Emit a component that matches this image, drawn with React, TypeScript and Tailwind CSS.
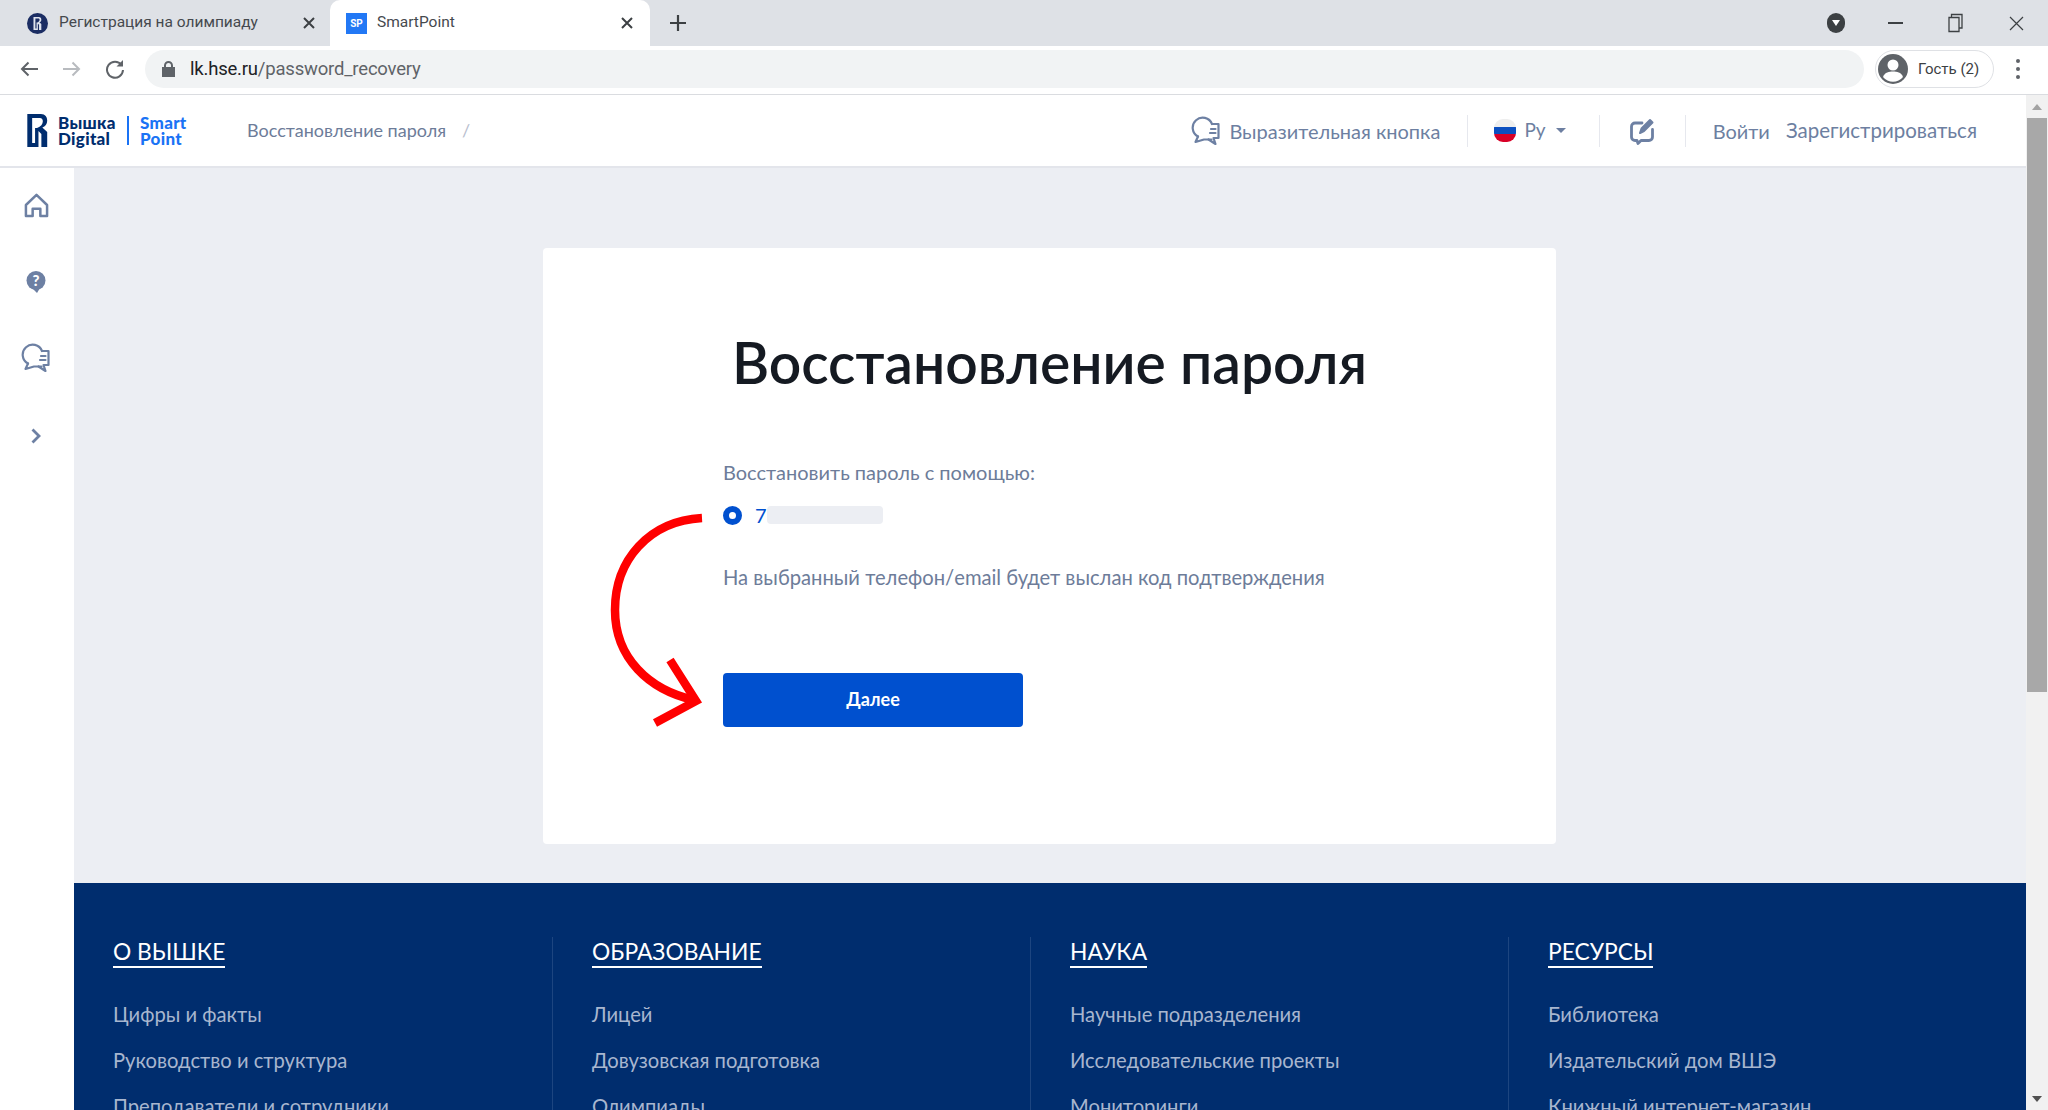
import React from "react";

const Chat = ({ className }: { className: string }) => (
  <svg viewBox="0 0 30 30" className={className} fill="none" stroke="#6d80a3" strokeWidth="2.200" strokeLinejoin="round" strokeLinecap="round">
    <path d="M7 20.500A10 10 0 1 1 21 8" />
    <path d="M7 20.500L4.500 26 13 23.500H20.500" />
    <path d="M21 8H27.500V22H22.500L24.500 28 17.500 23.500" />
    <path d="M20 13H24.500M19 17H24.500" />
  </svg>
);

const columns = [
  { title: "О ВЫШКЕ", items: ["Цифры и факты", "Руководство и структура", "Преподаватели и сотрудники"] },
  { title: "ОБРАЗОВАНИЕ", items: ["Лицей", "Довузовская подготовка", "Олимпиады"] },
  { title: "НАУКА", items: ["Научные подразделения", "Исследовательские проекты", "Мониторинги"] },
  { title: "РЕСУРСЫ", items: ["Библиотека", "Издательский дом ВШЭ", "Книжный интернет-магазин"] },
];

const HseMark = ({ className, color = "#002d6e" }: { className: string; color?: string }) => (
  <svg viewBox="0 0 21 34" className={className} fill={color} fillRule="evenodd">
    <path d="M0 0H14C18.500 0 20.500 3 20.500 7C20.500 10.500 18.500 12.800 15.500 14L20.500 18.500V34H14.500V20.500L11.500 17.500V34H0ZM5 4V30H8V14.500H10C14 13 16 10.500 16 7.500C16 5.500 15 4 13 4Z" />
  </svg>
);

const TabClose = ({ className }: { className: string }) => (
  <svg viewBox="0 0 14 14" className={className} stroke="#3c4043" strokeWidth="2" fill="none">
    <path d="M2 2l10 10M12 2L2 12" />
  </svg>
);

export default function App() {
  return (
    <div className="h-[1110px] w-[2048px] overflow-hidden flex flex-col bg-white font-['Lato','Noto_Sans',sans-serif]">
      {/* Browser tab strip */}
      <div className="h-[46px] shrink-0 bg-[#dee1e6] flex items-center font-['Roboto',sans-serif]">
        <div className="w-[330px] h-full flex items-center pl-[27px] pr-[14px]">
          <div className="w-[21px] h-[21px] rounded-full bg-[#1b2d63] flex items-center justify-center">
            <HseMark className="w-[9px] h-[13px]" color="#dfe3ee" />
          </div>
          <span className="ml-[11px] text-[15.5px] text-[#45494e] whitespace-nowrap">Регистрация на олимпиаду</span>
          <TabClose className="w-[14px] h-[14px] ml-auto" />
        </div>
        <div className="w-[320px] h-full bg-white rounded-t-[10px] flex items-center pl-[16px] pr-[16px]">
          <div className="w-[21px] h-[21px] bg-[#2278f5] flex items-center justify-center text-white text-[10px] font-bold">SP</div>
          <span className="ml-[10px] text-[15.5px] text-[#45494e]">SmartPoint</span>
          <TabClose className="w-[14px] h-[14px] ml-auto" />
        </div>
        <svg viewBox="0 0 16 16" className="w-[16px] h-[16px] ml-[20px]" stroke="#3c4043" strokeWidth="2.200" fill="none">
          <path d="M8 0v16M0 8h16" />
        </svg>
        <div className="ml-auto flex items-center">
          <div className="w-[18px] h-[20px] rounded-full bg-[#3c4043] flex items-center justify-center">
            <div className="w-0 h-0 border-l-[4px] border-r-[4px] border-t-[6px] border-l-transparent border-r-transparent border-t-white" />
          </div>
          <div className="w-[15px] h-[2px] bg-[#3c4043] ml-[43px]" />
          <svg viewBox="0 0 15 20" className="w-[15px] h-[20px] ml-[45px]" stroke="#3c4043" strokeWidth="1.300" fill="none">
            <path d="M1 4.500h10v14H1zM3.500 4.500V1.500H14v13.500h-3" />
          </svg>
          <svg viewBox="0 0 15 15" className="w-[15px] h-[15px] ml-[46px] mr-[24px]" stroke="#3c4043" strokeWidth="1.200" fill="none">
            <path d="M1 1l13 13M14 1L1 14" />
          </svg>
        </div>
      </div>

      {/* Browser toolbar */}
      <div className="h-[49px] shrink-0 bg-white border-b border-[#dadce0] flex items-center pb-[2px]">
        <svg viewBox="0 0 18 16" className="w-[18px] h-[16px] ml-[20px]" stroke="#5f6368" strokeWidth="2" fill="none">
          <path d="M18 8H2M8.500 1.500L2 8l6.500 6.500" />
        </svg>
        <svg viewBox="0 0 18 16" className="w-[18px] h-[16px] ml-[25px]" stroke="#b8bbbf" strokeWidth="2" fill="none">
          <path d="M0 8h16M9.500 1.500L16 8l-6.500 6.500" />
        </svg>
        <svg viewBox="0 0 20 20" className="w-[20px] h-[20px] ml-[24px]" stroke="#5f6368" strokeWidth="2" fill="none">
          <path d="M16.500 6A8 8 0 1 0 18 11" />
          <path d="M18 1v6.500h-6.500" fill="#5f6368" stroke="none" />
        </svg>
        <div className="w-[1719px] h-[38px] ml-[20px] rounded-full bg-[#f1f3f4] flex items-center pl-[17px]">
          <svg viewBox="0 0 13 16" className="w-[13px] h-[16px]" fill="#5f6368">
            <path d="M2 6V4.500a4.500 4.500 0 0 1 9 0V6h2v10H0V6zm2 0h5V4.500a2.500 2.500 0 0 0-5 0z" />
          </svg>
          <span className="ml-[15px] pt-[2px] text-[18.5px] tracking-[-0.2px] font-['Roboto',sans-serif]">
            <span className="text-[#202124]">lk.hse.ru</span>
            <span className="text-[#5f6368]">/password_recovery</span>
          </span>
        </div>
        <div className="ml-[11px] w-[119px] h-[38px] rounded-full border border-[#dfe1e5] flex items-center pl-[2px]">
          <svg viewBox="0 0 30 30" className="w-[30px] h-[30px]">
            <circle cx="15" cy="15" r="15" fill="#5f6368" />
            <circle cx="15" cy="11" r="5.500" fill="#fff" />
            <path d="M5 23c2-5 6-5.500 10-5.500s8 .5 10 5.500a13 13 0 0 1-20 0z" fill="#fff" />
          </svg>
          <span className="ml-[10px] text-[15px] text-[#3c4043] font-['Roboto',sans-serif] whitespace-nowrap">Гость (2)</span>
        </div>
        <div className="ml-[22px] flex flex-col gap-[4px]">
          <div className="w-[4px] h-[4px] rounded-full bg-[#5f6368]" />
          <div className="w-[4px] h-[4px] rounded-full bg-[#5f6368]" />
          <div className="w-[4px] h-[4px] rounded-full bg-[#5f6368]" />
        </div>
      </div>

      {/* Page viewport with scrollbar */}
      <div className="flex-1 min-h-0 flex">
        <div className="w-[2026px] flex flex-col">
          {/* App header */}
          <div className="h-[73px] shrink-0 bg-white border-b-2 border-[#e3e5eb] flex items-center">
            <HseMark className="w-[21px] h-[33px] ml-[27px]" />
            <div className="ml-[10px] flex flex-col text-[17px] leading-[16px] tracking-[0.3px] font-black text-[#002d6e] w-[69px]">
              <span>Вышка</span>
              <span>Digital</span>
            </div>
            <div className="w-[2px] h-[29px] bg-[#1a73f5]" />
            <div className="ml-[11px] flex flex-col text-[17px] leading-[16px] tracking-[0.3px] font-black text-[#1a73f5] w-[60px]">
              <span>Smart</span>
              <span>Point</span>
            </div>
            <span className="ml-[47px] text-[18px] text-[#6d7c99] whitespace-nowrap">Восстановление пароля</span>
            <span className="ml-[16px] text-[18px] text-[#b9c0cf]">/</span>
            <div className="ml-auto flex items-center h-[32px]">
              <Chat className="w-[30px] h-[30px]" />
              <span className="ml-[8px] text-[20px] text-[#6d7fa1] whitespace-nowrap">Выразительная кнопка</span>
              <div className="w-px h-[32px] bg-[#e6e8ee] ml-[27px]" />
              <div className="ml-[26px] w-[22px] h-[23px] rounded-[9px] overflow-hidden flex flex-col">
                <div className="flex-1 bg-[#eeeeee]" />
                <div className="flex-1 bg-[#0b4fc0]" />
                <div className="flex-1 bg-[#d80027]" />
              </div>
              <span className="ml-[8px] text-[19px] text-[#6d7fa1]">Ру</span>
              <div className="ml-[10px] w-0 h-0 border-l-[5px] border-r-[5px] border-t-[5px] border-l-transparent border-r-transparent border-t-[#6d7fa1]" />
              <div className="w-px h-[32px] bg-[#e6e8ee] ml-[33px]" />
              <svg viewBox="0 0 26 28" className="ml-[29px] w-[26px] h-[28px]" fill="none" stroke="#6d80a3" strokeWidth="2.800" strokeLinejoin="round" strokeLinecap="round">
                <path d="M13 6H6a3.500 3.500 0 0 0-3.500 3.500v10.500a3.500 3.500 0 0 0 3.500 3.500h2l1 3 3-3h8a3.500 3.500 0 0 0 3.500-3.500v-7.500" />
                <path d="M11 16l1.500-4.500L21 3l2.500 2.500-8.500 8.500z" fill="#6d80a3" strokeWidth="2" />
              </svg>
              <div className="w-px h-[32px] bg-[#e6e8ee] ml-[30px]" />
              <span className="ml-[27px] text-[20px] text-[#6d7fa1]">Войти</span>
              <span className="ml-[16px] mr-[49px] text-[20.5px] text-[#6d7fa1] whitespace-nowrap">Зарегистрироваться</span>
            </div>
          </div>

          <div className="flex-1 min-h-0 flex">
            {/* Sidebar */}
            <div className="w-[74px] shrink-0 bg-white flex flex-col items-center pt-[25px] pr-[2px]">
              <svg viewBox="0 0 26 26" className="w-[25px] h-[25px]" fill="none" stroke="#6d80a3" strokeWidth="2.600" strokeLinejoin="round">
                <path d="M13 2L2 12.500V24h7v-7.500h8V24h7V12.500z" />
              </svg>
              <svg viewBox="0 0 20 22" className="w-[20px] h-[22px] mt-[53px]" fill="#6d80a3">
                <circle cx="10" cy="9.500" r="9.500" />
                <path d="M6 17L11 22 14 17z" />
                <text x="10" y="15" textAnchor="middle" fontSize="15" fontWeight="900" fill="#fff" fontFamily="Lato, sans-serif">?</text>
              </svg>
              <Chat className="w-[30px] h-[30px] mt-[50px]" />
              <svg viewBox="0 0 10 16" className="w-[10px] h-[16px] mt-[55px]" fill="none" stroke="#6d80a3" strokeWidth="2.800">
                <path d="M1.500 1.500L8 8l-6.500 6.500" />
              </svg>
            </div>

            {/* Content */}
            <div className="flex-1 min-w-0 bg-[#eceef3] flex flex-col">
              <div className="h-[715px] shrink-0 pt-[80px] pl-[469px]">
                <div className="w-[1013px] h-[596px] bg-white rounded-[4px] pl-[180px] relative">
                  <h1 className="absolute inset-x-0 top-[82px] text-center text-[57px] leading-[64px] font-semibold text-[#151a22] whitespace-nowrap">Восстановление пароля</h1>
                  <div className="pt-[212px] text-[20px] leading-[24px] text-[#6d7c99]">Восстановить пароль с помощью:</div>
                  <div className="mt-[21px] flex items-center h-[20px]">
                    <div className="w-[19px] h-[19px] rounded-full border-[6px] border-[#0050cf] bg-white" />
                    <span className="ml-[13px] text-[20px] leading-[24px] text-[#0050cf]">7</span>
                    <div className="w-[116px] h-[18px] rounded-[4px] bg-[#eceef3]" />
                  </div>
                  <div className="mt-[40px] text-[20.2px] leading-[24px] text-[#6d7c99] whitespace-nowrap">На выбранный телефон/email будет выслан код подтверждения</div>
                  <button className="mt-[84px] w-[300px] h-[54px] pb-[2px] rounded-[4px] bg-[#0050cf] text-white text-[18px] font-bold">Далее</button>
                  {/* Red annotation arrow */}
                  <svg viewBox="0 0 110 230" className="absolute left-[66px] top-[262px] w-[110px] h-[230px]" fill="none" stroke="#ff0000" strokeWidth="8.500">
                    <path d="M93 8C40 11 6 50 6 100C6 148 40 180 85 190" />
                    <path d="M61 150L87 191 46 213" />
                  </svg>
                </div>
              </div>

              {/* Footer */}
              <div className="flex-1 bg-[#002d6e] pt-[54px]">
                <div className="grid grid-cols-[478px_478px_478px_518px]">
                  {columns.map((c, i) => (
                    <div key={c.title} className={i === 0 ? "pl-[39px] h-[200px]" : "pl-[39px] h-[200px] border-l border-[#1d4580]"}>
                      <div className="pt-[1px]">
                        <span className="inline-block text-[22.8px] leading-[26px] text-white border-b-2 border-white pb-[2px] whitespace-nowrap">{c.title}</span>
                      </div>
                      <div className="mt-[33px] flex flex-col gap-[20px] text-[20.2px] leading-[26px] text-[#a8b6cf] whitespace-nowrap">
                        {c.items.map((it) => (
                          <span key={it}>{it}</span>
                        ))}
                      </div>
                    </div>
                  ))}
                </div>
              </div>
            </div>
          </div>
        </div>

        {/* Scrollbar */}
        <div className="w-[22px] shrink-0 bg-[#f1f1f1] flex flex-col items-center">
          <div className="h-[23px] flex items-center justify-center">
            <div className="w-0 h-0 border-l-[5px] border-r-[5px] border-b-[6px] border-l-transparent border-r-transparent border-b-[#a3a3a3]" />
          </div>
          <div className="w-[20px] h-[574px] bg-[#a8a8a8]" />
          <div className="mt-auto h-[23px] flex items-center justify-center">
            <div className="w-0 h-0 border-l-[5px] border-r-[5px] border-t-[6px] border-l-transparent border-r-transparent border-t-[#505050]" />
          </div>
        </div>
      </div>
    </div>
  );
}
